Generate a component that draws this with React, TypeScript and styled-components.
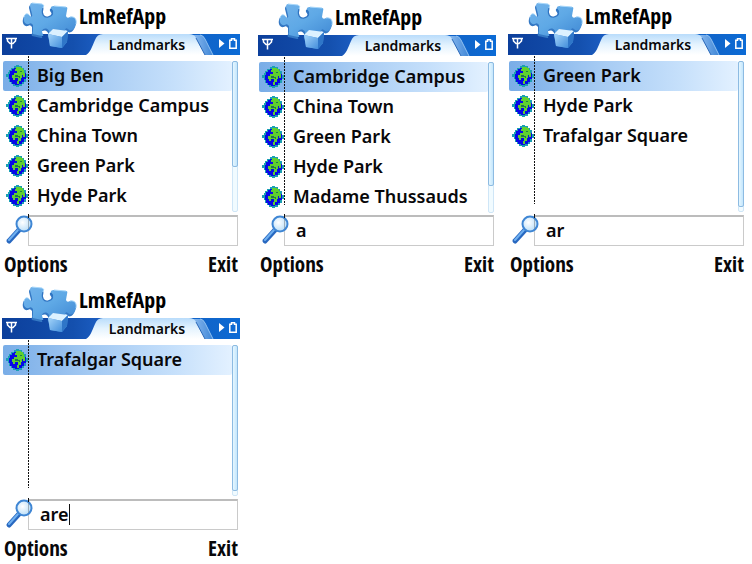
import React, { useId, useState } from "react";
import styled, { createGlobalStyle } from "styled-components";

type ScreenData = {
  id: string;
  items: string[];
  query: string;
  thumb: number;
  column: number;
  caret?: boolean;
};

const screens: ScreenData[] = [
  {
    id: "all",
    items: ["Big Ben", "Cambridge Campus", "China Town", "Green Park", "Hyde Park"],
    query: "",
    thumb: 71,
    column: 1,
  },
  {
    id: "filter-a",
    items: ["Cambridge Campus", "China Town", "Green Park", "Hyde Park", "Madame Thussauds"],
    query: "a",
    thumb: 83,
    column: 2,
  },
  {
    id: "filter-ar",
    items: ["Green Park", "Hyde Park", "Trafalgar Square"],
    query: "ar",
    thumb: 98,
    column: 3,
  },
  {
    id: "filter-are",
    items: ["Trafalgar Square"],
    query: "are",
    thumb: 98,
    column: 1,
    caret: true,
  },
];

const GlobalStyle = createGlobalStyle`
  *, *::before, *::after { box-sizing: border-box; }
  body { margin: 0; background: #fff; color: #08080a; font-family: "Noto Sans", sans-serif; }
  button, input { font: inherit; color: inherit; }
`;

const Board = styled.main`
  display: grid;
  grid-template-columns: repeat(3, minmax(0, 1fr));
  column-gap: 15px;
  row-gap: 5px;
  padding: 0 6px 0 2px;
`;

const Phone = styled.section<{ $column: number }>`
  grid-column: ${(p) => p.$column};
  display: flex;
  flex-direction: column;
  height: 279px;
  margin-left: ${(p) => (p.$column === 2 ? "3px" : "0")};
  margin-right: ${(p) => (p.$column === 2 ? "-3px" : "0")};
  padding-top: ${(p) => (p.$column === 2 ? "1px" : "0")};
`;

const Header = styled.header`
  position: relative;
  flex: none;
`;

const Title = styled.h1`
  margin: 0;
  padding-left: 77px;
  height: 34px;
  font: 700 22px/30px "Open Sans Condensed", "Noto Sans", sans-serif;
  color: #000;
`;

const Logo = styled.svg`
  position: absolute;
  left: 19px;
  top: 0;
  width: 56px;
  height: 50px;
`;

const StatusBar = styled.div`
  display: flex;
  height: 21px;
  background: linear-gradient(90deg, #0c3f9b 0%, #1450ae 30%, #1b5cc0 40%, #0f66cc 90%, #0b6bd6 100%);
`;

const SignalArea = styled.div`
  flex: 1;
  padding: 3px 4px;
  line-height: 0;
`;

const Tab = styled.button`
  position: relative;
  flex: none;
  width: 128px;
  padding: 0 0 0 12px;
  border: 0;
  background: none;
  text-align: center;
  font-size: 14px;
  font-weight: 600;
  line-height: 22px;
`;

const TabShape = styled.svg`
  position: absolute;
  inset: 0;
  width: 100%;
  height: 100%;
`;

const TabLabel = styled.span`
  position: relative;
  display: block;
  padding-right: 18px;
`;

const BatteryArea = styled.div`
  flex: none;
  width: 26px;
  padding: 2px 2px 0 5px;
  line-height: 0;
`;

const Body = styled.div`
  display: flex;
  position: relative;
  flex: 1;
  padding: 6px 2px 0 1px;
`;

const Rule = styled.div`
  position: absolute;
  z-index: 1;
  left: 26px;
  top: 1px;
  width: 1px;
  height: 148px;
  background: repeating-linear-gradient(#111 0 2px, transparent 2px 3px);
`;

const List = styled.ul`
  flex: 1;
  min-width: 0;
  margin: 0;
  padding: 0;
  list-style: none;
`;

const Row = styled.button<{ $active: boolean }>`
  display: flex;
  align-items: center;
  gap: 9px;
  width: 100%;
  height: 30px;
  padding: 0 0 0 3px;
  border: 0;
  border-radius: 2px;
  text-align: left;
  white-space: nowrap;
  font-size: 18px;
  font-weight: 600;
  line-height: 28px;
  background: ${(p) =>
    p.$active ? "linear-gradient(90deg, #79ade7 0%, #a6cbf3 40%, #c6e0fb 75%, #e3f1ff 100%)" : "none"};
`;

const RowText = styled.span`
  padding-bottom: 2px;
`;

const ScrollTrack = styled.div`
  flex: none;
  width: 6px;
  height: 151px;
  border: 1px solid #cfe6f7;
  border-radius: 2px;
  background: #f1fbff;
`;

const ScrollThumb = styled.div<{ $size: number }>`
  height: ${(p) => p.$size}%;
  margin: -1px;
  border: 1px solid #8dbbe2;
  border-radius: 2px;
  background: linear-gradient(90deg, #e6f7ff, #c4e6fc);
`;

const SearchBar = styled.div`
  display: flex;
  position: relative;
  flex: none;
  height: 31px;
  padding: 0 2px 0 26px;
`;

const SearchLabel = styled.label`
  position: absolute;
  z-index: 1;
  left: 3px;
  top: -1px;
  line-height: 0;
`;

const SearchBox = styled.div`
  display: flex;
  flex: 1;
  min-width: 0;
  align-items: center;
  padding: 0 0 2px 11px;
  border: 1px solid #cacaca;
  border-top: 2px solid #bcbcbc;
  background: #fff;
`;

const SearchInput = styled.input<{ $fit: boolean }>`
  ${(p) => (p.$fit ? "field-sizing: content;" : "width: 100%;")}
  min-width: 0;
  height: 26px;
  padding: 0;
  border: 0;
  outline: 0;
  background: none;
  font-size: 18px;
  font-weight: 600;
`;

const Caret = styled.span`
  width: 1px;
  height: 21px;
  background: #111;
`;

const SoftKeys = styled.footer`
  display: flex;
  flex: none;
  justify-content: space-between;
  height: 33px;
  padding: 3px 2px 0;
`;

const SoftKey = styled.button`
  padding: 0;
  border: 0;
  background: none;
  font: 700 21px/28px "Open Sans Condensed", "Noto Sans", sans-serif;
`;

function PuzzleLogo() {
  const id = useId();
  const piece =
    "M11 3 L21 4 Q24 5 22 8 C20 14 23 18 27 17 C32 16 33 12 30 9 Q29 6 33 6 L45 7 Q47 7 46 10 L45 16 Q46 19 49 17 C54 16 56 20 55 24 C54 30 49 32 47 29 Q44 27 44 31 L43 36 L30 36 Q27 36 28 33 C29 28 22 27 21 31 C21 34 24 36 21 36 L12 34 Q11 33 12 31 L12 25 Q10 22 8 24 C4 25 2 21 3 17 C4 13 7 13 9 16 Q12 18 11 14 L9 6 Q9 3 11 3 Z";
  return (
    <Logo viewBox="0 0 56 50" aria-hidden="true">
      <defs>
        <linearGradient id={`${id}p`} x1="0" y1="0" x2="1" y2="1">
          <stop offset="0" stopColor="#72b3eb" />
          <stop offset=".5" stopColor="#5fa9e6" />
          <stop offset="1" stopColor="#4089d4" />
        </linearGradient>
        <linearGradient id={`${id}c`} x1="0" y1="0" x2="1" y2="1">
          <stop offset="0" stopColor="#a5d5fa" />
          <stop offset="1" stopColor="#438edb" />
        </linearGradient>
      </defs>
      <path d={piece} transform="translate(-1 2)" fill="#3478c4" />
      <path d={piece} fill={`url(#${id}p)`} />
      <path
        d="M11 3 L21 4 Q24 5 22 8 M33 6 L45 7 M3 17 C4 13 7 13 9 16 M49 17 C54 16 56 20 55 24"
        fill="none"
        stroke="#a9d8fb"
        strokeWidth="1"
      />
      <path d="M22 8 C20 14 23 18 27 17 C32 16 33 12 30 9" fill="none" stroke="#2f74c2" strokeWidth="1.200" />
      <path d="M27 34 L32 29 L47 31 L46 42 L41 48 L29 46 Z" fill="#4d96de" />
      <path d="M27 34 L32 29 L47 31 L41 37 Z" fill="#dcf1ff" />
      <path d="M27 34 L41 37 L41 48 L29 46 Z" fill={`url(#${id}c)`} />
      <path d="M41 37 L47 31 L46 42 L41 48 Z" fill="#2f76c8" />
    </Logo>
  );
}

function Signal() {
  return (
    <svg width="11" height="12" viewBox="0 0 11 12" fill="none" stroke="#fff" strokeWidth="1.5" aria-hidden="true">
      <path d="M0 1.500H11M1.500 1.500V4L4 6.500H7L9.500 4V1.500M5.500 1V11.500" />
    </svg>
  );
}

function BatteryStatus() {
  return (
    <svg width="19" height="16" viewBox="0 0 19 16" aria-hidden="true">
      <path d="M0 3 L5.500 7.500 L0 12 Z" fill="#fff" />
      <path d="M10.800 4.200 H12.500 V2.700 H15.500 V4.200 H17.200 V12.200 H10.800 Z" fill="none" stroke="#fff" strokeWidth="1.500" />
    </svg>
  );
}

function TabBackdrop() {
  const id = useId();
  return (
    <TabShape viewBox="0 0 128 21" preserveAspectRatio="none" aria-hidden="true">
      <defs>
        <linearGradient id={`${id}t`} x1="0" y1="0" x2="0" y2="1">
          <stop offset="0" stopColor="#b9dcfb" />
          <stop offset=".5" stopColor="#e4f3fe" />
          <stop offset="1" stopColor="#fff" />
        </linearGradient>
        <linearGradient id={`${id}s`} x1="0" y1="0" x2="1" y2="0">
          <stop offset="0" stopColor="#8dbcf0" />
          <stop offset="1" stopColor="#3f86d6" />
        </linearGradient>
      </defs>
      <path d="M106 1 H114 Q117 1 119 5 L127 21 H118 Z" fill={`url(#${id}s)`} />
      <path d="M114 1 Q117 1 119 5 L127 21" fill="none" stroke="#8fc0f0" strokeWidth="1" />
      <path d="M0 21 C4 19 6 13 9 6 Q11 0 17 0 H103 Q108 0 110 4 L119 21 Z" fill={`url(#${id}t)`} />
      <path d="M110 4 L119 21" stroke="#2a68b8" strokeWidth="1" />
    </TabShape>
  );
}

function Globe() {
  return (
    <svg width="22" height="24" viewBox="0 0 22 24" shapeRendering="crispEdges" aria-hidden="true">
      <path
        d="M8 2h2V1h3v1h3v2h2v2h2v4h2v4h-2v4h-2v2h-2v2h-3v1h-3v-1H7v-2H5v-2H3v-3H2v-2H0v-3h2V8h1V6h2V4h3z"
        fill="#1b9fb4"
      />
      <path d="M8 4h8v2h2v3h2v6h-2v3h-2v2h-3v1H9v-1H6v-2H4v-3H3v-5h1V7h2V5h2z" fill="#0808e6" />
      <path d="M10 3h5v1h2v2h1v3h1v4h-2v-2h-1v3h-1v3h-2v3h-2v-3h1v-3h-3v2H7v-2H6v-3h2v-2h3V7H9V5h1z" fill="#5fd02f" />
      <path d="M9 11h3v1h2v2h-1v-1H9zM14 7h2v1h-2z" fill="#1e7a4a" />
    </svg>
  );
}

function Magnifier() {
  const id = useId();
  return (
    <svg width="28" height="31" viewBox="0 0 28 31" aria-hidden="true">
      <defs>
        <radialGradient id={id} cx=".4" cy=".4" r=".65">
          <stop offset="0" stopColor="#ffffff" />
          <stop offset="1" stopColor="#b5dcf8" />
        </radialGradient>
      </defs>
      <path d="M4 27 L14 16" stroke="#2868c0" strokeWidth="5" strokeLinecap="round" />
      <path d="M4 26 L13 16" stroke="#6fb0f0" strokeWidth="2" strokeLinecap="round" />
      <circle cx="19" cy="10" r="7.500" fill={`url(#${id})`} stroke="#3f86d4" strokeWidth="2" />
      <path d="M23.500 5V15" stroke="#69747f" strokeWidth="1" opacity=".5" />
      <path d="M23.500 0V4" stroke="#111" strokeWidth="1" />
    </svg>
  );
}

function PhoneScreen({ data }: { data: ScreenData }) {
  const [query, setQuery] = useState(data.query);
  const [selected, setSelected] = useState(0);
  const inputId = `search-${data.id}`;
  return (
    <Phone $column={data.column}>
      <Header>
        <Title>LmRefApp</Title>
        <StatusBar>
          <SignalArea>
            <Signal />
          </SignalArea>
          <Tab type="button">
            <TabBackdrop />
            <TabLabel>Landmarks</TabLabel>
          </Tab>
          <BatteryArea>
            <BatteryStatus />
          </BatteryArea>
        </StatusBar>
        <PuzzleLogo />
      </Header>
      <Body>
        <Rule />
        <List>
          {data.items.map((name, i) => (
            <li key={name}>
              <Row type="button" $active={i === selected} onClick={() => setSelected(i)}>
                <Globe />
                <RowText>{name}</RowText>
              </Row>
            </li>
          ))}
        </List>
        <ScrollTrack>
          <ScrollThumb $size={data.thumb} />
        </ScrollTrack>
      </Body>
      <SearchBar>
        <SearchLabel htmlFor={inputId} aria-label="Search landmarks">
          <Magnifier />
        </SearchLabel>
        <SearchBox>
          <SearchInput
            id={inputId}
            type="text"
            autoComplete="off"
            $fit={Boolean(data.caret)}
            value={query}
            onChange={(e) => setQuery(e.target.value)}
          />
          {data.caret && <Caret />}
        </SearchBox>
      </SearchBar>
      <SoftKeys>
        <SoftKey type="button">Options</SoftKey>
        <SoftKey type="button">Exit</SoftKey>
      </SoftKeys>
    </Phone>
  );
}

export default function App() {
  return (
    <>
      <GlobalStyle />
      <Board>
        {screens.map((s) => (
          <PhoneScreen key={s.id} data={s} />
        ))}
      </Board>
    </>
  );
}
